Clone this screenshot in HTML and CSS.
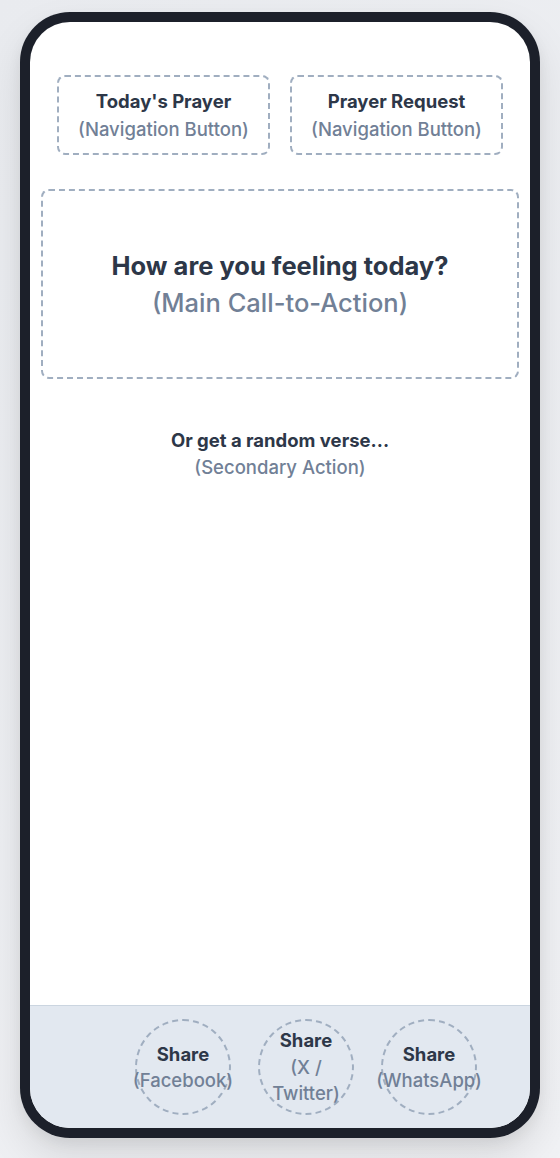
FILE: index.html
```html
<!DOCTYPE html>
<html lang="en">
<head>
<meta charset="utf-8">
<title>Prayer App Wireframe</title>
<link rel="stylesheet" href="styles.css">
</head>
<body>
  <div class="phone">
    <div class="screen">
      <main class="content">
        <nav class="nav-row">
          <div class="box nav-btn">
            <span class="label">Today's Prayer</span>
            <span class="note">(Navigation Button)</span>
          </div>
          <div class="box nav-btn">
            <span class="label">Prayer Request</span>
            <span class="note">(Navigation Button)</span>
          </div>
        </nav>
        <div class="box cta">
          <span class="label">How are you feeling today?</span>
          <span class="note">(Main Call-to-Action)</span>
        </div>
        <div class="secondary">
          <span class="label">Or get a random verse...</span>
          <span class="note">(Secondary Action)</span>
        </div>
      </main>
      <footer class="share-bar">
        <div class="share">
          <span class="label">Share</span>
          <span class="note">(Facebook)</span>
        </div>
        <div class="share">
          <span class="label">Share</span>
          <span class="note">(X / Twitter)</span>
        </div>
        <div class="share">
          <span class="label">Share</span>
          <span class="note">(WhatsApp)</span>
        </div>
      </footer>
    </div>
  </div>
</body>
</html>
```

FILE: styles.css
```css
* { box-sizing: border-box; }

html, body {
  margin: 0;
  height: 100%;
}

body {
  background: linear-gradient(135deg, #e9ebef 0%, #f1f2f5 100%);
  font-family: Inter, "Noto Sans", sans-serif;
  padding: 12px 20px 20px;
}

.phone {
  width: 520px;
  height: 1126px;
  background: #1c202a;
  border-radius: 50px;
  padding: 10px;
  box-shadow: 0 20px 40px rgba(0, 0, 0, 0.10), 0 6px 14px rgba(0, 0, 0, 0.06);
}

.screen {
  height: 100%;
  background: #ffffff;
  border-radius: 40px;
  overflow: hidden;
  display: flex;
  flex-direction: column;
}

.content {
  flex: 1;
  padding: 53px 11px 0;
  display: flex;
  flex-direction: column;
}

.label {
  display: block;
  font-weight: 700;
  color: #2d3748;
}

.note {
  display: block;
  font-weight: 500;
  color: #718096;
}

.box {
  border: 2px dashed #a0aec0;
  border-radius: 8px;
  text-align: center;
  display: flex;
  flex-direction: column;
  justify-content: center;
}

.nav-row {
  display: grid;
  grid-template-columns: 1fr 1fr;
  gap: 20px;
  padding: 0 16px;
}

.nav-btn {
  height: 80px;
  font-size: 18.5px;
  line-height: 28px;
}

.cta {
  margin-top: 34px;
  height: 190px;
  font-size: 25.5px;
  line-height: 37px;
}

.secondary {
  margin-top: 48px;
  text-align: center;
  font-size: 18.5px;
  line-height: 27px;
}

.share-bar {
  height: 123px;
  background: #e2e8f0;
  border-top: 1px solid #cbd5e0;
  display: flex;
  align-items: center;
  gap: 27px;
  padding-left: 105px;
}

.share {
  width: 96px;
  height: 96px;
  border: 2px dashed #a0aec0;
  border-radius: 50%;
  padding: 8px;
  display: flex;
  flex-direction: column;
  justify-content: center;
  align-items: center;
  text-align: center;
  font-size: 18.5px;
  line-height: 26.5px;
}
```
